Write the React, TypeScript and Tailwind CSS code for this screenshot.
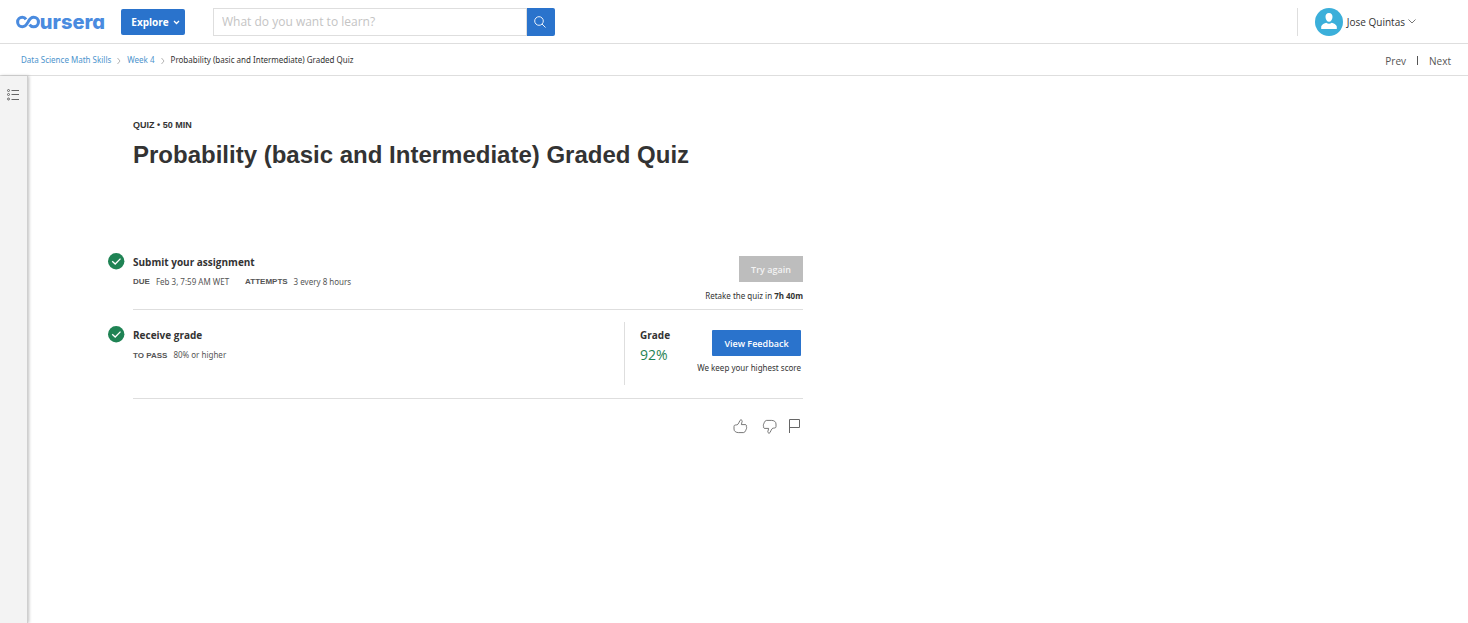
import React from "react";

function Logo() {
  return (
    <a href="#home" aria-label="coursera" className="flex h-5 w-[89px] shrink-0 items-center text-[#4a8bdf]">
      <svg width="26" height="14" viewBox="0 0 26 14" fill="none" stroke="currentColor" strokeWidth="3.2" aria-hidden="true">
        <path d="M10.500 4.300C9.500 2.700 8.300 2 6.600 2C4 2 1.700 4.200 1.700 7C1.700 9.800 4 12 6.600 12C9.500 12 10.900 10.200 12.400 7.400C14 4.200 15.600 2 18.500 2C21.400 2 23.500 4.200 23.500 7C23.500 9.800 21.400 12 18.500 12C16.800 12 15.300 11.300 14.200 9.700" />
      </svg>
      <span className="-ml-px font-['Inter'] text-[20px] leading-5 font-extrabold [font-feature-settings:'cv11']">ursera</span>
    </a>
  );
}

function Check() {
  return (
    <svg className="block h-[17px] w-[17px] shrink-0" viewBox="0 0 17 17" fill="none" aria-label="Completed" role="img">
      <circle cx="8.2" cy="8.3" r="8.200" fill="#1f8354" />
      <path d="M4.2 8.200L7.200 11L12.500 5.600" stroke="white" strokeWidth="1.3" />
    </svg>
  );
}

function Crumb() {
  return (
    <svg className="mx-[6px] mt-[2px] h-2 w-1 shrink-0" viewBox="0 0 4 8" fill="none" stroke="#b5b5b5" aria-hidden="true">
      <path d="M.5 1L3 4L.5 7" />
    </svg>
  );
}

const thumb = "M1.5 6.3C2.5 5.7 4 6.3 5 5.2C6 4 6.3 2.5 7 1.4C7.7.4 9.3.9 9.2 2.3C9.1 3.5 8.3 4.500 8.4 5.6H12C13.7 5.6 14 7.2 13.2 7.9C14 8.5 13.8 9.6 13 10C13.3 11 12.8 11.7 12.1 12C12 13 11.4 13.6 10.4 13.6H5.5C3 13.6 1 12.3 1 10V7.5C1 7 1.1 6.6 1.5 6.3Z";

export default function App() {
  return (
    <div className="flex min-h-screen flex-col bg-white font-['Noto_Sans','Open_Sans',sans-serif] text-[8px] leading-3 text-[#333]">
      <header className="flex h-11 items-center border-b border-[#dedede] pl-4">
        <Logo />
        <button className="ml-4 flex h-[26px] w-16 items-center justify-center gap-1 rounded-xs bg-[#2a73cc] pl-[5px] font-['Open_Sans',sans-serif] text-[10px] font-bold text-white">
          Explore
          <svg className="mt-px" width="7" height="5" viewBox="0 0 7 5" fill="none" stroke="currentColor" strokeWidth="1.3" aria-hidden="true"><path d="M1 1L3.5 3.5L6 1" /></svg>
        </button>
        <form className="ml-7 flex h-7 w-[342px]" onSubmit={(e) => e.preventDefault()}>
          <input aria-label="Search" placeholder="What do you want to learn?" className="min-w-0 flex-1 border border-[#dedede] px-2 font-['Open_Sans',sans-serif] text-[12px] outline-none placeholder:text-[#c4c4c4]" />
          <button aria-label="Submit search" className="flex w-7 items-center justify-center rounded-r-xs bg-[#2a73cc] pr-[3px] text-white">
            <svg width="12" height="12" viewBox="0 0 12 12" fill="none" stroke="currentColor" strokeWidth=".9" aria-hidden="true"><circle cx="5" cy="5" r="4.3" /><path d="M8 8L11.5 11.5" /></svg>
          </button>
        </form>
        <button className="mr-[52px] ml-auto flex h-7 items-center border-l border-[#dedede] pl-[17px] font-['Open_Sans',sans-serif] text-[10px]">
          <svg width="28" height="28" viewBox="0 0 28 28" aria-hidden="true">
            <circle cx="14" cy="14" r="14" fill="#3bafda" />
            <path d="M14 5C16.5 5 17.6 6.7 17.5 9C17.4 11.5 16 13.8 14 13.8S10.6 11.5 10.5 9C10.4 6.7 11.5 5 14 5ZM6.2 21V18.5C6.5 16.5 9.5 15.5 11.3 14.8C13 16 15 16 16.7 14.8C18.5 15.5 21.5 16.5 21.8 18.5V21Z" fill="white" />
          </svg>
          <span className="ml-1">Jose Quintas</span>
          <svg className="ml-[3px]" width="8" height="5" viewBox="0 0 8 5" fill="none" stroke="#777" aria-hidden="true"><path d="M.5.5L4 4L7.5.5" /></svg>
        </button>
      </header>
      <div className="flex h-8 items-center justify-between border-b border-[#dedede] pr-[17px] pl-[21px]">
        <nav aria-label="Breadcrumb" className="flex items-center">
          <a href="#course" className="text-[#4d94cd]">Data Science Math Skills</a>
          <Crumb />
          <a href="#week" className="text-[#4d94cd]">Week 4</a>
          <Crumb />
          <span>Probability (basic and Intermediate) Graded Quiz</span>
        </nav>
        <nav aria-label="Items" className="flex items-center pt-[2px] font-['Open_Sans',sans-serif] text-[10px] text-[#555]">
          <a href="#prev">Prev</a>
          <span className="mx-[11px] h-[9px] w-px bg-[#555]" />
          <a href="#next">Next</a>
        </nav>
      </div>
      <div className="flex flex-1">
        <aside className="w-7 shrink-0 border-r border-[#cfcfcf] bg-[#f3f3f3] shadow-[1px_0_3px_rgba(0,0,0,0.25)]">
          <button aria-label="Open course outline" className="mt-3 ml-[7px] block">
            <svg width="12" height="13" viewBox="0 0 12 13" fill="none" stroke="#666" aria-hidden="true">
              <path d="M4.5 2.5H12M4.5 6.5H12M4.5 11.5H12" />
              <circle cx="1.5" cy="2.5" r="1" /><circle cx="1.5" cy="6.5" r="1" /><circle cx="1.5" cy="11" r="1" />
            </svg>
          </button>
        </aside>
        <main className="max-w-[775px] min-w-0 flex-1 pt-[43px] pl-20">
          <div className="pl-[25px]">
            <p className="font-['Liberation_Sans',sans-serif] text-[9px] leading-3 font-bold">QUIZ • 50 MIN</p>
            <h1 className="mt-2 font-['Liberation_Sans',sans-serif] text-[24px] leading-8 font-bold">Probability (basic and Intermediate) Graded Quiz</h1>
          </div>
          <section className="mt-[81px] flex gap-2">
            <div className="pt-px"><Check /></div>
            <div className="flex h-[58px] flex-1 justify-between border-b border-[#dedede]">
              <div>
                <h2 className="pt-[2px] font-['Open_Sans',sans-serif] text-[10px] leading-4 font-bold">Submit your assignment</h2>
                <p className="mt-[6px] flex whitespace-nowrap text-[#555]">
                  <strong className="font-['Liberation_Sans',sans-serif]">DUE</strong><span className="ml-[6px]">Feb 3, 7:59 AM WET</span>
                  <strong className="ml-4 font-['Liberation_Sans',sans-serif]">ATTEMPTS</strong><span className="ml-[6px]">3 every 8 hours</span>
                </p>
              </div>
              <div className="flex flex-col items-end pt-1">
                <button disabled className="h-[26px] w-16 bg-[#bdbdbd] pt-px font-['Open_Sans',sans-serif] text-[9px] font-semibold text-[#f3f3f3]">Try again</button>
                <p className="mt-2">Retake the quiz in <b>7h 40m</b></p>
              </div>
            </div>
          </section>
          <section className="flex gap-2">
            <div className="pt-4"><Check /></div>
            <div className="flex h-[89px] flex-1 justify-between border-b border-[#dedede]">
              <div className="pt-[17px]">
                <h2 className="font-['Open_Sans',sans-serif] text-[10px] leading-4 font-bold">Receive grade</h2>
                <p className="mt-[6px] text-[#555]"><strong className="mr-[6px] font-['Liberation_Sans',sans-serif]">TO PASS</strong>80% or higher</p>
              </div>
              <div className="mt-3 mb-[13px] flex max-w-[179px] flex-1 justify-between border-l border-[#dedede] pl-[15px]">
                <div className="pt-[5px]">
                  <h3 className="font-['Open_Sans',sans-serif] text-[10px] leading-4 font-bold">Grade</h3>
                  <p className="mt-[2px] font-['Open_Sans',sans-serif] text-[14px] leading-5 text-[#1f8354]">92%</p>
                </div>
                <div className="flex flex-col items-end pt-2 pr-[2px]">
                  <button className="h-[26px] w-[89px] rounded-[1px] bg-[#2a73cc] pt-px font-['Open_Sans',sans-serif] text-[9px] font-semibold text-white">View Feedback</button>
                  <p className="mt-[6px] whitespace-nowrap">We keep your highest score</p>
                </div>
              </div>
            </div>
          </section>
          <div className="mt-5 flex justify-end pr-[2px]">
            <button aria-label="Like"><svg width="15" height="15" viewBox="0 0 15 15" fill="none" stroke="#555" strokeWidth=".8" aria-hidden="true"><path d={thumb} /></svg></button>
            <button aria-label="Dislike" className="ml-[14px]"><svg width="15" height="15" viewBox="0 0 15 15" fill="none" stroke="#555" strokeWidth=".8" aria-hidden="true"><path transform="rotate(180 7.5 7.5)" d={thumb} /></svg></button>
            <button aria-label="Report" className="ml-3"><svg width="12" height="15" viewBox="0 0 12 15" fill="none" stroke="#666" aria-hidden="true"><path d="M.5 14V.5H10.5V8.5H.5" /></svg></button>
          </div>
        </main>
      </div>
    </div>
  );
}
